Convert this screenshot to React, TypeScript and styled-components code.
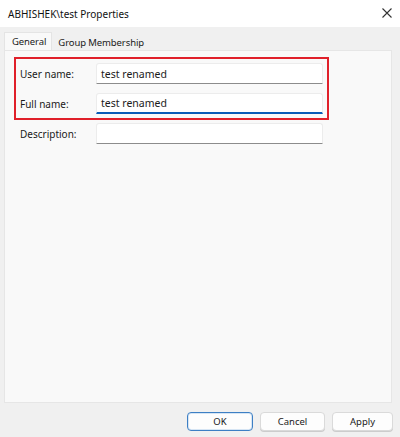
import React from "react";
import styled, { createGlobalStyle } from "styled-components";

const GlobalStyle = createGlobalStyle`
  *, *::before, *::after {
    box-sizing: border-box;
  }
  html, body {
    margin: 0;
    padding: 0;
    background: #f0f0f0;
  }
  body {
    font-family: "Noto Sans", "Open Sans", sans-serif;
    font-size: 10px;
    color: #1a1a1a;
  }
`;

const Window = styled.div`
  width: 400px;
  height: 437px;
  display: flex;
  flex-direction: column;
  background: #f0f0f0;
  overflow: hidden;
`;

const TitleBar = styled.div`
  height: 27px;
  flex: 0 0 27px;
  background: #ffffff;
  display: flex;
  align-items: center;
  justify-content: space-between;
  padding: 0 8px 0 8px;
`;

const Title = styled.span`
  font-size: 10px;
  color: #111;
  line-height: 1;
`;

const CloseButton = styled.div`
  width: 10px;
  height: 10px;
  display: flex;
  align-items: center;
  justify-content: center;
  margin-top: -1px;
`;

const Body = styled.div`
  flex: 1;
  display: flex;
  flex-direction: column;
  padding: 5px 7px 0 4px;
`;

const Tabs = styled.div`
  display: flex;
  align-items: flex-end;
  height: 18px;
`;

const Tab = styled.div<{ $active?: boolean }>`
  height: ${p => (p.$active ? 18 : 16)}px;
  padding: 0 ${p => (p.$active ? 5 : 5)}px 0 ${p => (p.$active ? 7 : 5)}px;
  display: flex;
  align-items: center;
  font-size: 9.5px;
  line-height: 1;
  background: ${p => (p.$active ? "#f9f9f9" : "#f0f0f0")};
  border: 1px solid ${p => (p.$active ? "#e4e4e4" : "transparent")};
  border-bottom: none;
  letter-spacing: -0.1px;
`;

const Panel = styled.div`
  flex: 0 0 353px;
  margin-right: 1px;
  background: #f9f9f9;
  border: 1px solid #e6e6e6;
  padding: 6px 0 0 9px;
`;

const Highlight = styled.div`
  width: 315px;
  border: 2px solid #e0202a;
  padding: 4px 0 4px 0;
  display: flex;
  flex-direction: column;
  gap: 9px;
`;

const Row = styled.div<{ $plain?: boolean }>`
  display: flex;
  align-items: center;
  padding-left: ${p => (p.$plain ? 6 : 4)}px;
  margin-top: ${p => (p.$plain ? 3 : 0)}px;
`;

const Label = styled.label`
  width: 76px;
  font-size: 10px;
  color: #1a1a1a;
`;

const Field = styled.div<{ $focused?: boolean }>`
  width: 227px;
  height: 21px;
  background: #ffffff;
  border: 1px solid #ececec;
  border-bottom: ${p => (p.$focused ? "2px solid #0a5db8" : "1px solid #8c8c8c")};
  border-radius: 3px 3px 0 0;
  padding: 0 4px;
  display: flex;
  align-items: center;
  font-size: 10.5px;
  color: #1a1a1a;
`;

const Footer = styled.div`
  display: flex;
  justify-content: flex-end;
  gap: 7px;
  padding: 9px 0 0;
`;

const Button = styled.div<{ $primary?: boolean; $w?: number }>`
  width: ${p => p.$w ?? 65}px;
  height: 19px;
  border-radius: 4px;
  background: #fdfdfd;
  border: 1px solid ${p => (p.$primary ? "#3d7fc4" : "#dadada")};
  box-shadow: ${p => (p.$primary ? "inset 0 0 0 1px #d6e5f4" : "0 1px 0 #cccccc")};
  display: flex;
  align-items: center;
  justify-content: center;
  font-size: 9.5px;
  color: #1a1a1a;
`;

export default function App() {
  return (
    <>
      <GlobalStyle />
      <Window>
        <TitleBar>
          <Title>ABHISHEK\test Properties</Title>
          <CloseButton>
            <svg width="10" height="10" viewBox="0 0 10 10">
              <path d="M0.5 0.5L9.5 9.5M9.5 0.5L0.5 9.5" stroke="#333" strokeWidth="1.1" />
            </svg>
          </CloseButton>
        </TitleBar>
        <Body>
          <Tabs>
            <Tab $active>General</Tab>
            <Tab>Group Membership</Tab>
          </Tabs>
          <Panel>
            <Highlight>
              <Row>
                <Label>User name:</Label>
                <Field>test renamed</Field>
              </Row>
              <Row>
                <Label>Full name:</Label>
                <Field $focused>test renamed</Field>
              </Row>
            </Highlight>
            <Row $plain>
              <Label>Description:</Label>
              <Field />
            </Row>
          </Panel>
          <Footer>
            <Button $primary $w={66}>OK</Button>
            <Button>Cancel</Button>
            <Button $w={61}>Apply</Button>
          </Footer>
        </Body>
      </Window>
    </>
  );
}
